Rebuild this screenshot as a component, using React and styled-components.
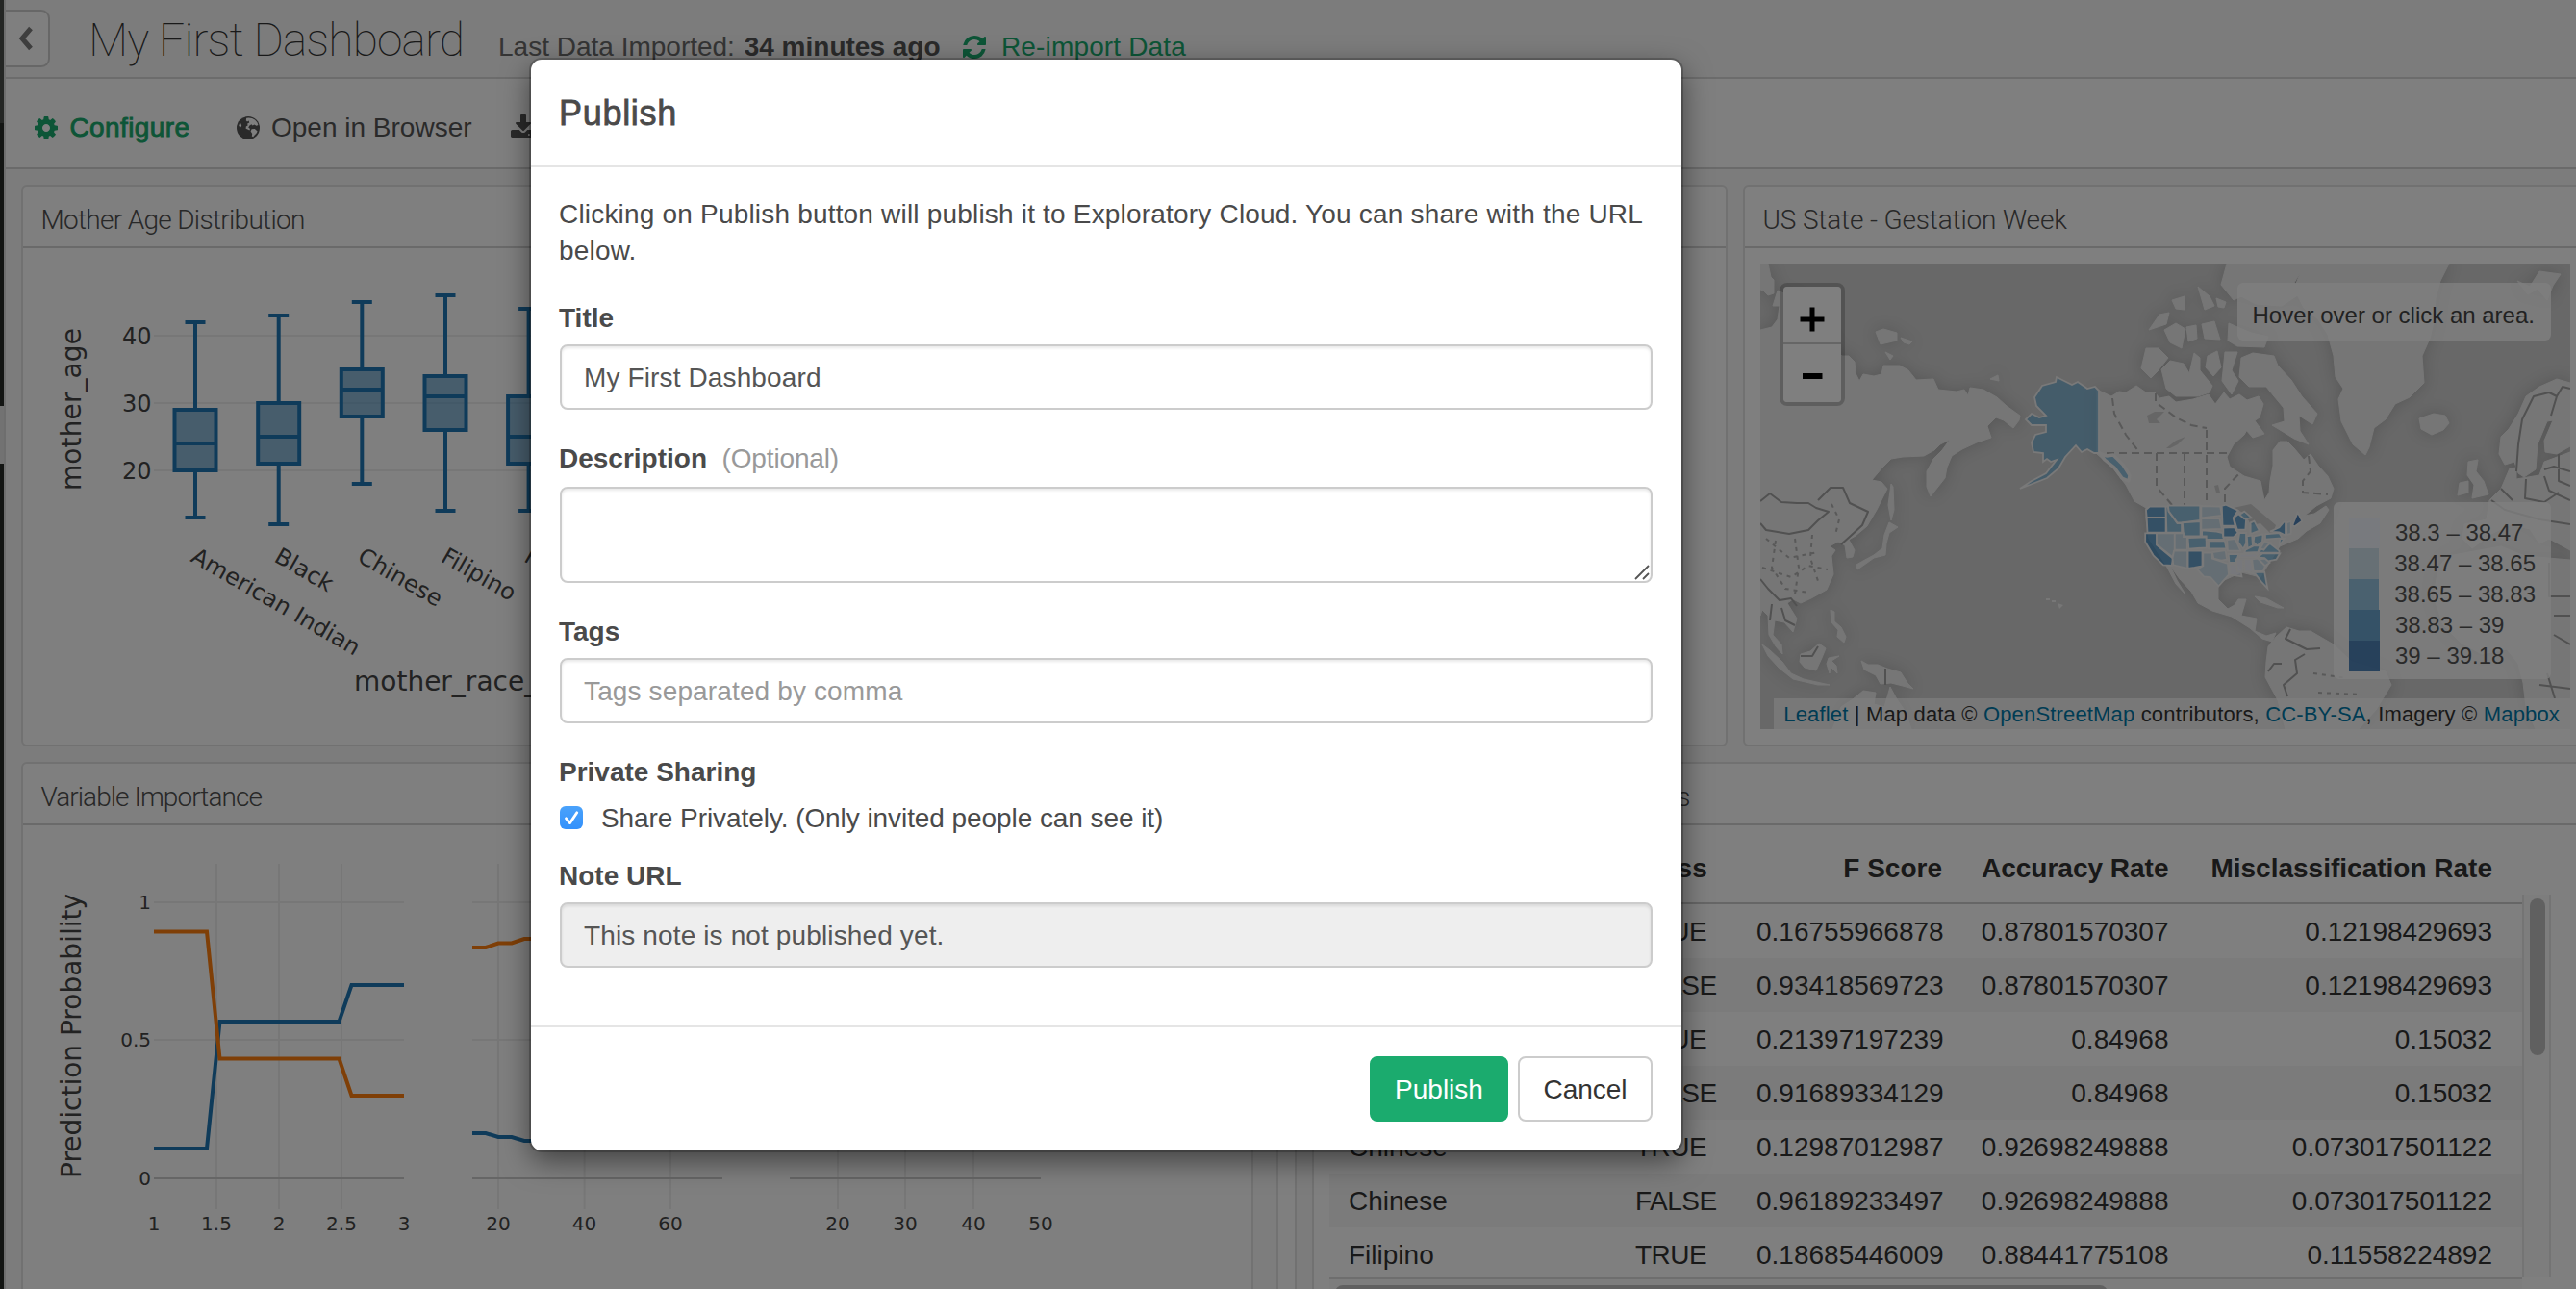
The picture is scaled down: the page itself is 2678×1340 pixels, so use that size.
import React from "react";
import styled, { createGlobalStyle, css } from "styled-components";

const GlobalStyle = createGlobalStyle`
  * { box-sizing: border-box; }
  html, body { margin: 0; padding: 0; overflow: hidden; }
  body {
    font-family: "Liberation Sans", Arial, sans-serif;
    font-size: 28px;
    color: #333;
    background: #f8f8f8;
  }
`;

/* ---------- page shell ---------- */

const Page = styled.div`
  position: relative;
  display: flex;
  width: 2678px;
  height: 1340px;
  overflow: hidden;
  background: #f8f8f8;
`;

const Rail = styled.div`
  flex: none;
  width: 4px;
  display: flex;
  flex-direction: column;
`;

const RailPart = styled.div`
  flex: ${(p) => (p.$h ? `0 0 ${p.$h}px` : "1")};
  background: ${(p) => p.$color};
`;

const Main = styled.main`
  flex: 1;
  min-width: 0;
  border-left: 2px solid #dcdcdc;
`;

const Header = styled.header`
  display: flex;
  align-items: baseline;
  height: 82px;
  border-bottom: 2px solid #d8d8d8;
  white-space: nowrap;
`;

const BackButton = styled.div`
  align-self: flex-start;
  display: flex;
  align-items: center;
  justify-content: center;
  width: 46px;
  height: 60px;
  margin: 10px 40px 0 0;
  padding-right: 5px;
  border: 2px solid #cfcfcf;
  border-left: 0;
  border-radius: 0 9px 9px 0;
  background: #fff;
`;

const PageTitle = styled.h1`
  margin: 0;
  width: 426px;
  font-family: Roboto, "Liberation Sans", sans-serif;
  font-size: 48px;
  font-weight: 100;
  line-height: 84px;
  letter-spacing: -0.9px;
  color: #333;
`;

const ImportInfo = styled.div`
  color: #6a6a6a;
  width: 481px;
  b { color: #555; margin-left: 2px; }
`;

const ImportLink = styled.a`
  align-self: flex-start;
  display: flex;
  align-items: center;
  gap: 14px;
  height: 97px;
  letter-spacing: 0.15px;
  color: #1bab6e;
`;

const Toolbar = styled.nav`
  display: flex;
  align-items: center;
  height: 94px;
  padding: 9px 0 0 28px;
  border-bottom: 2px solid #d4d4d4;
  background: #fff;
  white-space: nowrap;
`;

const Tool = styled.div`
  display: flex;
  align-items: center;
  gap: 10.5px;
  margin-right: ${(p) => p.$after || 0}px;
  color: ${(p) => (p.$active ? "#1bab6e" : "#555")};
  ${(p) =>
    p.$active &&
    css`
      letter-spacing: 0.4px;
      -webkit-text-stroke: 0.9px #1bab6e;
    `}
  svg { display: block; }
`;

const Board = styled.section`
  display: flex;
  flex-direction: column;
  gap: 16px;
  padding: 16px 0 0 16px;
`;

const BoardRow = styled.div`
  display: flex;
  gap: 16px;
  height: 584px;
`;

const CardBox = styled.article`
  flex: none;
  width: ${(p) => p.$w}px;
  border: 2px solid #e2e2e2;
  border-radius: 6px;
  background: #fff;
  overflow: hidden;
`;

const CardTitle = styled.h2`
  margin: 0;
  height: 64px;
  padding: 6px 0 0 18.5px;
  border-bottom: 2px solid #d4d4d4;
  font-family: Roboto, "Liberation Sans", sans-serif;
  font-size: 28px;
  font-weight: 300;
  line-height: 57px;
  letter-spacing: ${(p) => p.$track || -0.7}px;
  color: #505050;
  white-space: nowrap;
`;

const CardBody = styled.div`
  display: flex;
  height: 516px;
  padding: ${(p) => p.$pad || "0"};
`;

function Card({ title, width, track, pad, children }) {
  return (
    <CardBox $w={width}>
      <CardTitle $track={track}>{title}</CardTitle>
      <CardBody $pad={pad}>{children}</CardBody>
    </CardBox>
  );
}

/* ---------- icons (1792-unit grid) ---------- */

const ICONS = {
  cog: "M1152 896q0-106-75-181t-181-75-181 75-75 181 75 181 181 75 181-75 75-181zm512-109v222q0 12-8 23t-20 13l-185 28q-19 54-39 91 35 50 107 138 10 12 10 25t-9 23q-27 37-99 108t-94 71q-12 0-26-9l-138-108q-44 23-91 38-16 136-29 186-7 28-36 28h-222q-14 0-24.5-8.5t-11.5-21.5l-28-184q-49-16-90-37l-141 107q-10 9-25 9-14 0-25-11-126-114-165-168-7-10-7-23 0-12 8-23 15-21 51-66.5t54-70.5q-27-50-41-99l-183-27q-13-2-21-12.5t-8-23.5v-222q0-12 8-23t19-13l186-28q14-46 39-92-40-57-107-138-10-12-10-24 0-10 9-23 26-36 98.5-107.5t94.5-71.5q13 0 26 10l138 107q44-23 91-38 16-136 29-186 7-28 36-28h222q14 0 24.5 8.5t11.5 21.5l28 184q49 16 90 37l142-107q9-9 24-9 13 0 25 10 129 119 165 170 7 8 7 22 0 12-8 23-15 21-51 66.5t-54 70.5q26 50 41 98l183 28q13 2 21 12.5t8 23.5z",
  refresh:
    "M1639 1056q0 5-1 7-64 268-268 434.5t-478 166.5q-146 0-282.5-55t-243.5-157l-129 129q-19 19-45 19t-45-19-19-45v-448q0-26 19-45t45-19h448q26 0 45 19t19 45-19 45l-137 137q71 66 161 102t187 36q134 0 250-65t186-179q11-17 53-117 8-23 30-23h192q13 0 22.5 9.5t9.5 22.5zm25-800v448q0 26-19 45t-45 19h-448q-26 0-45-19t-19-45 19-45l138-138q-148-137-349-137-134 0-250 65t-186 179q-11 17-53 117-8 23-30 23h-199q-13 0-22.5-9.5t-9.5-22.5v-7q65-268 270-434.5t480-166.5q146 0 284 55.5t245 156.5l130-129q19-19 45-19t45 19 19 45z",
  download:
    "M1344 1344q0-26-19-45t-45-19-45 19-19 45 19 45 45 19 45-19 19-45zm256 0q0-26-19-45t-45-19-45 19-19 45 19 45 45 19 45-19 19-45zm128-224v320q0 40-28 68t-68 28h-1472q-40 0-68-28t-28-68v-320q0-40 28-68t68-28h465l135 136q58 56 136 56t136-56l136-136h464q40 0 68 28t28 68zm-325-569q17 41-14 70l-448 448q-18 19-45 19t-45-19l-448-448q-31-29-14-70 17-39 59-39h256v-448q0-26 19-45t45-19h256q26 0 45 19t19 45v448h256q42 0 59 39z",
};

function Icon({ name }) {
  return (
    <svg width="28" height="28" viewBox="0 0 1792 1792" fill="currentColor">
      <path d={ICONS[name]} />
    </svg>
  );
}

function GlobeIcon() {
  return (
    <svg width="28" height="28" viewBox="0 0 28 28">
      <circle cx="14" cy="14" r="12" fill="currentColor" />
      <path
        fill="#fff"
        d="M12.2 3.8 L14.6 3.4 18 4 21 5.6 23.4 8.2 24.4 11 22.6 11.8 20.4 10.6 18.6 11.6 17.4 10.2 15.4 11.4 14.2 13.6 16 15 15.4 16.6 13.4 15.4 11.6 14.8 11.8 12.6 13.6 11.4 13.2 9.6 15.2 8.4 14.6 6.6 13 7.4 11.8 6.2z
           M17.6 15.2 L20.8 15 23.6 17.4 22.6 19.6 20.6 21.4 19.2 23.2 17.8 22.6 18.2 20 16.6 17.6z
           M5.2 8.4 L6.4 9.4 7.2 11.8 6.2 13.2 4.2 12z"
      />
    </svg>
  );
}

function ChevronIcon() {
  return (
    <svg width="22" height="28" viewBox="0 0 22 28" fill="none">
      <path d="M17 3.5 L8 14 L17 24.5" stroke="#7c7c7c" strokeWidth="5" />
    </svg>
  );
}

/* ---------- charts ---------- */

const ChartSvg = styled.svg`
  flex: none;
  display: block;
  text {
    font-family: "DejaVu Sans", Verdana, sans-serif;
    fill: #444;
  }
`;

const yAge = (v) => 629 - v * 7;

const BOXES = [
  { x: 203, s: [13, 20, 24, 29, 42], label: "American Indian" },
  { x: 289.7, s: [12, 21, 25, 30, 43], label: "Black" },
  { x: 376.3, s: [18, 28, 32, 35, 45], label: "Chinese" },
  { x: 463, s: [14, 26, 31, 34, 46], label: "Filipino" },
  { x: 549.6, s: [14, 21, 25, 31, 44], label: "Hawaiian" },
];

function BoxPlot() {
  return (
    <ChartSvg width="875" height="516" viewBox="24 258 875 516">
      {[20, 30, 40].map((v) => (
        <g key={v}>
          <path d={`M160 ${yAge(v)}H880`} stroke="#eee" strokeWidth="2" />
          <text x="157.5" y={yAge(v) + 8.5} fontSize="24" textAnchor="end">
            {v}
          </text>
        </g>
      ))}
      {BOXES.map(({ x, s, label }) => (
        <g key={label}>
          <g stroke="#1f77b4" strokeWidth="4" fill="none">
            <path d={`M${x} ${yAge(s[4])}V${yAge(s[3])}M${x} ${yAge(s[1])}V${yAge(s[0])}`} />
            <path d={`M${x - 10.5} ${yAge(s[4])}h21M${x - 10.5} ${yAge(s[0])}h21`} />
            <rect
              x={x - 21.5}
              y={yAge(s[3])}
              width="43"
              height={yAge(s[1]) - yAge(s[3])}
              fill="#1f77b4"
              fillOpacity="0.5"
            />
            <path d={`M${x - 21.5} ${yAge(s[2])}h43`} />
          </g>
          <text transform={`translate(${x - 6} 583) rotate(30)`} fontSize="24" letterSpacing="0.15">
            {label}
          </text>
        </g>
      ))}
      <text transform="translate(84 510) rotate(-90)" fontSize="28" textLength="169">
        mother_age
      </text>
      <text x="368" y="718" fontSize="28">
        mother_race_
      </text>
    </ChartSvg>
  );
}

const FACETS = [
  {
    from: 160, to: 420, grid: [225, 290, 355],
    ticks: [[160, "1"], [225, "1.5"], [290, "2"], [355, "2.5"], [420, "3"]],
    blue: "160,1194 215,1194 228.5,1062 352.5,1062 365.5,1024 420,1024",
    orange: "160,968.5 215,968.5 228.5,1100.5 352.5,1100.5 365.5,1139 420,1139",
  },
  {
    from: 491, to: 751, grid: [518, 607.6, 697],
    ticks: [[518, "20"], [607.6, "40"], [697, "60"]],
    blue: "491,1178 505,1178 518,1182 532,1182 545,1186 560,1186",
    orange: "491,985 505,985 518,980.5 532,980.5 545,976 560,976",
  },
  {
    from: 821, to: 1082, grid: [871, 941, 1012],
    ticks: [[871, "20"], [941, "30"], [1012, "40"], [1082, "50"]],
  },
];

function LineFacets() {
  return (
    <ChartSvg width="1277" height="482" viewBox="24 858 1277 482">
      {FACETS.map((f) => (
        <g key={f.from}>
          <g stroke="#eee" strokeWidth="2">
            <path d={`M${f.from} 938H${f.to}M${f.from} 1081H${f.to}`} />
            {f.grid.map((x) => (
              <path key={x} d={`M${x} 898V1257`} />
            ))}
          </g>
          <path d={`M${f.from} 1225H${f.to}`} stroke="#ccc" strokeWidth="2" />
          {f.blue && <polyline points={f.blue} fill="none" stroke="#1f77b4" strokeWidth="4" />}
          {f.orange && <polyline points={f.orange} fill="none" stroke="#ff7f0e" strokeWidth="4" />}
          {f.ticks.map(([x, t]) => (
            <text key={t} x={x} y="1279" fontSize="20" textAnchor="middle">
              {t}
            </text>
          ))}
        </g>
      ))}
      <text x="157" y="945" fontSize="20" textAnchor="end">1</text>
      <text x="157" y="1088" fontSize="20" textAnchor="end">0.5</text>
      <text x="157" y="1232" fontSize="20" textAnchor="end">0</text>
      <text transform="translate(84 1225) rotate(-90)" fontSize="28" textLength="296">
        Prediction Probability
      </text>
    </ChartSvg>
  );
}

const TrackColumn = styled.div`
  width: 28px;
  border: solid #e4e4e4;
  border-width: 0 2px;
  background: #fafafa;
`;

/* ---------- map ---------- */

const BLUES = ["#eff3ff", "#bdd7e7", "#6baed6", "#3182bd", "#08519c"];

const LAND = [
  "1830,274 1838,274 1841,288 1844,291 1844,305 1838,307 1833,302 1830,301",
  "1830,343 1842,340 1848,332 1850,318 1843,318 1848,302 1870,312 1890,330 1905,360 1915,370 1922,370 1928,376 1929,388 1933,396 1937,389 1948,391 1956,389 1958,380 1975,380 1984,385 1992,395 2010,394 2015,405 2034,407 2042,405 2046,411 2048,403 2062,405 2076,413 2086,422 2100,432 2099,437 2093,445 2083,437 2075,434 2066,443 2070,455 2055,460 2040,467 2029,474 2024,486 2022,497 2007,516 2003,506 2003,490 2010,477 2019,468 2027,457 2017,462 2011,468 2000,474 1978,475 1966,477 1957,486 1946,499 1956,501 1962,508 1951,530 1941,547 1929,557 1922,561 1928,572 1926,579 1920,580 1918,567 1911,563 1902,568 1908,572 1904,578 1906,597 1899,613 1883,622 1872,627 1864,623 1858,627 1868,643 1864,657 1855,647 1845,645 1843,660 1852,670 1853,680 1846,672 1839,660 1838,640 1832,634 1830,640",
  "1966,503 1968,506 1969,530 1966,541 1963,525",
  "1964,543 1973,548 1964,554 1961,565 1960,577 1948,580 1941,585 1931,592 1930,587 1937,583 1948,577 1957,570 1959,556",
  "1832,670 1840,676 1853,688 1862,700 1875,706 1902,712 1890,712 1864,706 1849,694 1838,682",
  "1872,680 1882,677 1891,669 1898,674 1894,684 1888,697 1876,694 1871,688",
  "1901,684 1912,682 1904,687 1909,692 1910,700 1903,693 1902,700 1899,690",
  "1903,634 1907,636 1907,646 1914,652 1919,662 1917,668 1910,662 1911,655 1904,647",
  "1935,687 1942,691 1952,691 1962,695 1976,699 1983,710 1989,716 1978,713 1966,710 1955,711 1950,702 1938,696",
  "1905,758 1914,735 1926,727 1937,718 1950,720 1948,732 1959,735 1965,714 1972,727 1981,740 1987,758",
  "1950,345 1958,342 1972,346 1972,354 1955,358",
  "1976,351 1988,355 1985,358 1979,356",
  "1960,366 1968,370 1965,374",
  "2069,394 2077,390 2078,396",
  "2180,405 2195,412 2203,407 2210,408 2221,401 2231,408 2240,408 2245,414 2255,412 2262,418 2280,415 2296,410 2303,420 2312,408 2318,415 2328,410 2336,416 2348,412 2353,420 2349,434 2340,440 2333,452 2322,462 2315,475 2318,485 2333,495 2350,500 2354,520 2359,512 2360,500 2363,484 2363,468 2370,459 2378,459 2385,466 2395,478 2402,472 2410,484 2420,495 2426,508 2423,518 2408,526 2396,536 2406,534 2418,526 2421,530 2412,544 2398,552 2389,560 2370,568 2350,600 2330,595 2306,606 2306,623 2316,633 2323,629 2327,623 2335,623 2330,640 2346,643 2344,656 2356,661 2366,658 2362,667 2352,664 2339,653 2320,641 2300,635 2285,627 2278,615 2266,602 2256,588 2263,603 2272,618 2262,607 2252,588 2234,560 2231,540 2231,528 2219,521 2210,504 2197,487 2180,472",
  "2231,362 2244,362 2254,372 2243,386 2236,393 2226,383",
  "2247,384 2256,375 2270,378 2276,388 2281,367 2287,372 2287,385 2300,401 2297,408 2285,412 2262,412 2252,404",
  "2234,343 2245,327 2255,325 2252,337",
  "2258,312 2271,308 2271,322 2262,321",
  "2250,343 2262,336 2272,342 2268,362 2256,356",
  "2273,340 2283,338 2284,352 2275,355",
  "2285,298 2297,308 2302,318 2292,322",
  "2289,337 2302,334 2308,353 2292,352",
  "2304,310 2314,314 2312,320 2306,319",
  "2295,370 2305,365 2309,382 2301,391 2293,382",
  "2313,366 2326,366 2320,385 2327,396 2320,410 2310,396",
  "2317,336 2340,346 2358,350 2354,361 2326,360 2316,354",
  "2315,274 2397,274 2385,294 2390,306 2372,318 2345,316 2330,308 2322,312 2309,296",
  "2330,372 2342,367 2364,370 2368,380 2382,395 2393,412 2409,430 2404,441 2390,432 2391,448 2400,462 2385,456 2362,442 2375,438 2374,424 2364,412 2356,402 2338,402 2328,392",
  "2331,432 2340,432 2354,451 2342,455 2334,446",
  "2395,274 2546,274 2537,292 2532,310 2530,335 2526,352 2518,370 2520,398 2505,413 2490,420 2480,436 2468,445 2463,465 2459,473 2446,462 2434,438 2431,415 2436,404 2428,392 2426,370 2420,348 2410,332 2395,320 2385,300",
  "2515,435 2530,430 2542,432 2546,440 2540,447 2528,452 2517,446",
  "2617,292 2630,298 2640,282 2662,285 2654,297 2648,312 2638,300 2628,306",
  "2672,398 2658,394 2640,402 2626,412 2618,430 2608,446 2600,454 2598,472 2604,483 2614,480 2618,492 2624,496 2636,488 2638,462 2648,438 2654,437 2645,458 2646,470 2658,472 2672,464",
  "2609,487 2616,486 2616,498 2640,494 2645,480 2672,470 2672,572 2650,560 2640,565 2630,550 2610,545 2590,555 2570,570 2560,560 2562,545 2585,540 2588,520 2600,508",
  "2566,480 2576,478 2574,490 2582,500 2587,514 2570,518 2572,504 2565,494",
  "2557,502 2566,500 2566,512 2555,515",
  "2535,590 2545,578 2600,568 2625,578 2672,582 2672,758 2636,758 2626,735 2623,710 2618,690 2606,675 2580,680 2558,668 2540,650 2530,620",
  "2358,672 2366,662 2377,652 2390,656 2402,656 2426,670 2445,688 2480,698 2486,712 2470,738 2452,758 2376,758 2368,728 2355,704 2356,688",
  "2344,620 2356,622 2374,632 2368,632 2350,626",
];

const BORDERS =
  "M1830 521L1840 513 1852 522 1868 523 1880 523 1888 528 1901 532 1890 541 1880 551 1860 555 1836 551 1830 544M1890 520L1903 507 1916 507 1923 523 1942 532 1936 546 1924 557 1914 566M1830 602L1838 612 1850 624 1862 622 1868 630M1842 628L1840 645M1852 632L1856 645 1866 650M1960 695V712M1872 682L1884 682 1890 672M2381 654L2376 664 2398 675 2412 674M2396 680L2386 686 2388 700 2374 712 2378 724M2358 698L2364 690 2372 690M2672 404L2664 402 2658 412 2650 408 2634 412 2622 436 2618 462 2616 490M2658 412L2652 432M2645 488L2655 485 2672 490M2626 498L2625 518 2645 522 2660 512M2600 508L2612 520M2660 472L2660 500 2672 505M2645 495L2650 510 2672 520M2590 520L2604 530 2640 540 2672 545M2650 585V620H2672M2655 640H2672M2655 660L2672 670M2640 712L2672 716M2648 700L2656 726";

const DASHES =
  "M2190 471H2318M2242 471V506L2258 525M2271 471V525M2294 447V525M2196 414L2198 430 2210 452 2224 470M2241 409V418L2262 434 2278 442 2294 445M2313 522V508L2330 490M2400 474L2402 490 2394 500 2394 512 2420 514";

const STATES = [
  [4, "1068,140 1112,140 1112,174 1060,174 1058,150"],
  [4, "1060,174 1112,174 1112,221 1062,221"],
  [4, "1056,223 1087,223 1087,260 1131,302 1128,324 1105,322 1078,292 1056,250"],
  [2, "1087,223 1136,223 1136,275 1131,298 1087,258"],
  [3, "1112,140 1118,140 1120,155 1143,192 1155,192 1155,221 1114,221"],
  [3, "1118,137 1205,137 1205,183 1155,190 1143,190 1120,155"],
  [3, "1157,190 1206,186 1206,232 1160,232"],
  [2, "1136,223 1160,223 1160,234 1170,234 1170,275 1136,275"],
  [2, "1134,278 1171,278 1171,333 1132,322 1130,300"],
  [3, "1172,237 1222,235 1222,268 1174,272"],
  [4, "1172,278 1211,278 1211,325 1190,330 1172,333"],
  [2, "1208,138 1260,140 1264,168 1208,175"],
  [2, "1208,177 1258,177 1264,210 1208,212"],
  [3, "1210,214 1250,218 1266,222 1270,243 1222,243 1222,232 1210,232"],
  [3, "1228,247 1272,247 1276,271 1228,271"],
  [2, "1238,282 1274,276 1278,305 1262,308 1242,302"],
  [2, "1213,284 1238,284 1238,302 1280,318 1283,352 1255,388 1233,360 1215,358 1197,335 1213,325"],
  [4, "1264,138 1275,134 1308,152 1295,175 1300,200 1266,200"],
  [4, "1268,206 1298,204 1308,222 1296,235 1268,235"],
  [2, "1278,243 1300,240 1315,278 1280,278"],
  [3, "1282,288 1310,288 1302,315 1284,315"],
  [1, "1284,320 1302,320 1316,345 1318,358 1284,352"],
  [4, "1296,175 1310,162 1330,180 1328,212 1306,212"],
  [3, "1312,165 1325,155 1345,175 1325,178"],
  [3, "1312,222 1330,222 1330,255 1322,272 1308,250"],
  [3, "1332,232 1346,230 1348,262 1334,270"],
  [3, "1342,190 1352,185 1366,215 1342,225"],
  [3, "1352,232 1376,226 1374,250 1360,262 1350,250"],
  [3, "1328,275 1350,262 1368,262 1362,282 1325,284"],
  [1, "1315,288 1365,286 1355,298 1312,298"],
  [1, "1303,304 1322,304 1322,343 1306,343"],
  [1, "1325,304 1343,304 1348,342 1326,343"],
  [2, "1346,304 1362,302 1382,325 1376,342 1350,342"],
  [3, "1335,346 1380,344 1388,395 1372,375 1355,350"],
  [2, "1364,304 1382,302 1394,315 1382,325"],
  [3, "1360,298 1375,286 1422,286 1412,305 1390,310 1380,300"],
  [3, "1365,278 1395,255 1420,278 1420,284 1368,284"],
  [2, "1368,270 1380,248 1395,252 1378,275"],
  [3, "1382,226 1420,222 1428,238 1382,242"],
  [4, "1395,218 1420,205 1432,188 1437,188 1437,230 1420,220"],
  [2, "1440,190 1452,185 1452,225 1440,228"],
  [3, "1422,240 1434,240 1420,262"],
  [5, "1456,198 1470,158 1482,185 1462,202"],
];

const ALASKA =
  "2115,413 2123,401 2137,397 2138,392 2154,400 2160,397 2170,404 2178,402 2182,406 2182,471 2177,471 2170,467 2164,470 2158,463 2147,475 2140,487 2128,497 2100,508 2112,500 2127,492 2138,478 2132,480 2128,477 2124,480 2124,471 2114,470 2112,460 2116,452 2127,449 2127,442 2112,442 2106,436 2112,430 2120,434 2127,432 2117,422";
const PANHANDLE = "2183,471 2190,474 2197,473 2207,483 2214,494 2213,500 2206,497 2198,486 2188,478";

const MapFrame = styled.div`
  position: relative;
  flex: none;
  width: 842px;
  height: 484px;
  overflow: hidden;
  background: #d0d0d0;
`;

const MapSvg = styled.svg`
  display: block;
  .land {
    fill: #ececec;
    stroke: #ececec;
    stroke-width: 1;
    stroke-linejoin: round;
    filter: drop-shadow(0 0 8px rgba(0, 0, 0, 0.16));
  }
  .border { fill: none; stroke: #a2a2a2; stroke-width: 2; stroke-linejoin: round; }
  .dash { fill: none; stroke: #b2b2b2; stroke-width: 2; stroke-dasharray: 8 5; }
  .fine { stroke-dasharray: 4 5; }
  .lake { fill: #cccccc; }
  .state { stroke: #f2f2f2; stroke-width: 1.8; fill-opacity: 0.7; vector-effect: non-scaling-stroke; }
  .panhandle { stroke-width: 3.5; stroke-linejoin: round; }
`;

const ZoomControl = styled.div`
  position: absolute;
  left: 20px;
  top: 20px;
  display: flex;
  flex-direction: column;
  width: 68px;
  height: 128px;
  border: 4px solid rgba(0, 0, 0, 0.2);
  border-radius: 8px;
  background-clip: padding-box;
`;

const ZoomButton = styled.div`
  display: flex;
  align-items: center;
  justify-content: center;
  flex: none;
  height: 60px;
  background: #fff;
  border-radius: ${(p) => (p.$top ? "4px 4px 0 0" : "0 0 4px 4px")};
  border-bottom: ${(p) => (p.$top ? "2px solid #ccc" : "0")};
  padding-top: ${(p) => (p.$top ? 10 : 6)}px;
`;

const HoverInfo = styled.div`
  position: absolute;
  right: 20px;
  top: 20px;
  width: 326px;
  height: 60px;
  padding-left: 15.5px;
  border-radius: 6px;
  background: rgba(255, 255, 255, 0.8);
  font-size: 24px;
  line-height: 67px;
  color: #444;
  white-space: nowrap;
`;

const Legend = styled.div`
  position: absolute;
  right: 20px;
  top: 248px;
  width: 226px;
  height: 184px;
  padding: 16px;
  border-radius: 6px;
  background: rgba(255, 255, 255, 0.8);
  font-size: 24px;
  line-height: 32px;
  color: #555;
  white-space: nowrap;
`;

const LegendRow = styled.div`
  display: flex;
  gap: 16px;
  height: 32px;
  &::before {
    content: "";
    width: 32px;
    background: ${(p) => p.$color};
    opacity: 0.7;
  }
`;

const Attribution = styled.div`
  position: absolute;
  right: 0;
  bottom: 0;
  height: 32px;
  padding: 0 11px 0 10px;
  background: rgba(255, 255, 255, 0.7);
  font-size: 22px;
  line-height: 33px;
  letter-spacing: 0.165px;
  white-space: nowrap;
  color: #333;
  a { color: #0078a8; }
`;

const RANGES = ["38.3 – 38.47", "38.47 – 38.65", "38.65 – 38.83", "38.83 – 39", "39 – 39.18"];

function StateMap() {
  return (
    <MapFrame>
      <MapSvg width="842" height="484" viewBox="1830 274 842 484">
        <g className="land">
          {LAND.map((points) => (
            <polygon key={points} points={points} />
          ))}
        </g>
        <g className="lake">
          <path d="M2232 432L2240 428 2250 428 2242 436 2246 440 2234 440zM2252 466L2262 458 2272 454 2264 462 2256 466zM2302 505L2306 504 2308 512 2304 512z" />
          <path d="M2322 528L2340 524 2352 534 2366 546 2362 556 2350 544 2340 546 2334 534z" />
        </g>
        <path className="border" d={BORDERS} />
        <path className="dash" d={DASHES} />
        <path
          className="dash fine"
          d="M1836 560L1860 580 1890 574M1832 590L1862 600 1880 588 1900 592M1846 562L1842 590 1856 612 1880 616M1866 560L1870 590 1866 618M1884 556L1882 580 1890 604M1904 524L1912 540 1908 556M2405 700L2440 705M2410 720L2455 722"
        />
        <g transform="translate(1826 480) scale(0.38275 0.33333)">
          {STATES.map(([level, points]) => (
            <polygon key={points} className="state" points={points} fill={BLUES[level - 1]} />
          ))}
        </g>
        <polygon className="state" points={ALASKA} fill={BLUES[2]} />
        <polygon className="state panhandle" points={PANHANDLE} fill={BLUES[2]} />
        <path d="M2127 622h4v2h-4zM2133 624h4v2h-4zM2139 627l6 2-4 4z" fill="#eee" />
      </MapSvg>
      <ZoomControl>
        <ZoomButton $top>
          <svg width="26" height="26" viewBox="0 0 26 26">
            <path d="M13 0.5V25.5M0.5 13H25.5" stroke="#000" strokeWidth="5" />
          </svg>
        </ZoomButton>
        <ZoomButton>
          <svg width="26" height="26" viewBox="0 0 26 26">
            <path d="M3 13H23.5" stroke="#000" strokeWidth="6" />
          </svg>
        </ZoomButton>
      </ZoomControl>
      <HoverInfo>Hover over or click an area.</HoverInfo>
      <Legend>
        {RANGES.map((r, i) => (
          <LegendRow key={r} $color={BLUES[i]}>
            {r}
          </LegendRow>
        ))}
      </Legend>
      <Attribution>
        <a>Leaflet</a> | Map data © <a>OpenStreetMap</a> contributors, <a>CC-BY-SA</a>, Imagery © <a>Mapbox</a>
      </Attribution>
    </MapFrame>
  );
}

/* ---------- metrics table ---------- */

const TablePane = styled.div`
  flex: none;
  width: 1240px;
  margin-left: 16px;
`;

const TableLine = styled.div`
  display: grid;
  grid-template-columns: 298px 126px 233px 235.5px 336.5px;
  height: 56px;
  line-height: 57px;
  background: ${(p) => (p.$alt ? "#f6f6f6" : "#fff")};
  color: #333;
  white-space: nowrap;
`;

const TableHead = styled(TableLine)`
  height: 82px;
  padding-top: 8px;
  line-height: 73px;
  border-bottom: 2px solid #ccc;
  font-weight: bold;
`;

const TableRows = styled.div`
  height: 390px;
  overflow: hidden;
  border-bottom: 2px solid #ddd;
`;

const Cell = styled.div`
  padding: 0 20px;
  text-align: ${(p) => (p.$num ? "right" : "left")};
  letter-spacing: ${(p) => (p.$tight ? "-0.5px" : "normal")};
`;

const HTrack = styled.div`
  height: 20px;
  padding: 6px 0 0 6px;
  background: #fafafa;
  &::before {
    content: "";
    display: block;
    width: 803px;
    height: 16px;
    border-radius: 8px;
    background: #c1c1c1;
  }
`;

const VTrack = styled.div`
  flex: none;
  width: 30px;
  height: 398px;
  margin-top: 72px;
  padding: 4px 0 0 6px;
  border: solid #e8e8e8;
  border-width: 0 2px;
  background: #fafafa;
  &::before {
    content: "";
    display: block;
    width: 16px;
    height: 163px;
    border-radius: 8px;
    background: #c1c1c1;
  }
`;

const METRICS = [
  ["", "TRUE", "0.16755966878", "0.87801570307", "0.12198429693"],
  ["", "FALSE", "0.93418569723", "0.87801570307", "0.12198429693"],
  ["", "TRUE", "0.21397197239", "0.84968", "0.15032"],
  ["", "FALSE", "0.91689334129", "0.84968", "0.15032"],
  ["Chinese", "TRUE", "0.12987012987", "0.92698249888", "0.073017501122"],
  ["Chinese", "FALSE", "0.96189233497", "0.92698249888", "0.073017501122"],
  ["Filipino", "TRUE", "0.18685446009", "0.88441775108", "0.11558224892"],
];

function MetricsTable() {
  return (
    <>
      <TablePane>
        <TableHead>
          <Cell />
          <Cell>Class</Cell>
          <Cell $num>F Score</Cell>
          <Cell $num>Accuracy Rate</Cell>
          <Cell $num>Misclassification Rate</Cell>
        </TableHead>
        <TableRows>
          {METRICS.map((row, r) => (
            <TableLine key={r} $alt={r % 2 === 1}>
              {row.map((v, c) => (
                <Cell key={c} $num={c > 1} $tight={c === 1}>
                  {v}
                </Cell>
              ))}
            </TableLine>
          ))}
        </TableRows>
        <HTrack />
      </TablePane>
      <VTrack />
    </>
  );
}

/* ---------- publish dialog ---------- */

const Overlay = styled.div`
  position: absolute;
  inset: 0;
  display: flex;
  align-items: flex-start;
  padding: 62px 0 0 552px;
  background: rgba(0, 0, 0, 0.5);
`;

const Dialog = styled.div`
  width: 1196px;
  height: 1134px;
  border-radius: 11px;
  background: #fff;
  box-shadow: 0 0 0 2px rgba(0, 0, 0, 0.2), 0 10px 30px rgba(0, 0, 0, 0.5);
  color: #4a4a4a;
`;

const DialogTitle = styled.h3`
  margin: 0;
  height: 112px;
  padding: 0 29px;
  border-bottom: 2px solid #e5e5e5;
  font-size: 36px;
  font-weight: normal;
  line-height: 112px;
  letter-spacing: 0.7px;
  -webkit-text-stroke: 0.8px #4a4a4a;
`;

const DialogBody = styled.div`
  padding: 30px 30px 60px;
`;

const Lead = styled.p`
  margin: 0 -4px 31px -1px;
  line-height: 38px;
  letter-spacing: 0.19px;
`;

const Label = styled.div`
  margin: 0 0 ${(p) => (p.$below || 8) - 1}px -1px;
  padding-top: ${(p) => (p.$first ? 0 : 1)}px;
  font-weight: bold;
  line-height: 40px;
  span {
    margin-left: 15.5px;
    font-weight: normal;
    letter-spacing: -0.15px;
    color: #999;
  }
`;

const Field = styled.div`
  height: ${(p) => p.$h || 68}px;
  margin-bottom: 30px;
  padding: 0 23px;
  border: 2px solid #ccc;
  border-radius: 8px;
  background: ${(p) => (p.$disabled ? "#eee" : "#fff")};
  box-shadow: inset 0 2px 3px rgba(0, 0, 0, 0.09);
  line-height: 65px;
  letter-spacing: 0.13px;
  color: ${(p) => (p.$placeholder ? "#999" : "#555")};
  ${(p) =>
    p.$resizable &&
    css`
      display: flex;
      align-items: flex-end;
      justify-content: flex-end;
      padding: 0 1px 1px 0;
    `}
  &:last-child { margin-bottom: 0; }
`;

const CheckRow = styled.div`
  display: flex;
  align-items: center;
  gap: 19px;
  height: 40px;
  margin-bottom: 20px;
  line-height: 41px;
  letter-spacing: -0.07px;
`;

const CheckBox = styled.div`
  display: flex;
  width: 24px;
  height: 24px;
  border-radius: 6px;
  background: linear-gradient(#4aa2fb, #3391fb);
`;

const DialogFooter = styled.div`
  display: flex;
  justify-content: flex-end;
  gap: 10px;
  padding: 30px;
  border-top: 2px solid #e5e5e5;
`;

const Button = styled.div`
  width: ${(p) => (p.$primary ? 144 : 140)}px;
  height: 68px;
  border: 2px solid ${(p) => (p.$primary ? "#1bab6e" : "#ccc")};
  border-radius: 8px;
  background: ${(p) => (p.$primary ? "#1bab6e" : "#fff")};
  color: ${(p) => (p.$primary ? "#fff" : "#333")};
  line-height: 65px;
  text-align: center;
`;

function PublishDialog() {
  return (
    <Dialog>
      <DialogTitle>Publish</DialogTitle>
      <DialogBody>
        <Lead>
          Clicking on Publish button will publish it to Exploratory Cloud. You can share with the URL below.
        </Lead>
        <Label $first>Title</Label>
        <Field>My First Dashboard</Field>
        <Label $below={10}>
          Description<span>(Optional)</span>
        </Label>
        <Field $h={100} $resizable>
          <svg width="16" height="16" viewBox="0 0 16 16">
            <path d="M1 15L15 1M9 15L15 9" stroke="#555" strokeWidth="1.8" />
          </svg>
        </Field>
        <Label>Tags</Label>
        <Field $placeholder>Tags separated by comma</Field>
        <Label>Private Sharing</Label>
        <CheckRow>
          <CheckBox>
            <svg width="24" height="24" viewBox="0 0 24 24" fill="none">
              <path d="M6.5 12.8L10.5 17.6L17.8 6.8" stroke="#fff" strokeWidth="2.8" strokeLinecap="round" strokeLinejoin="round" />
            </svg>
          </CheckBox>
          Share Privately. (Only invited people can see it)
        </CheckRow>
        <Label>Note URL</Label>
        <Field $disabled>This note is not published yet.</Field>
      </DialogBody>
      <DialogFooter>
        <Button $primary>Publish</Button>
        <Button>Cancel</Button>
      </DialogFooter>
    </Dialog>
  );
}

/* ---------- app ---------- */

export default function App() {
  return (
    <>
      <GlobalStyle />
      <Page>
        <Rail>
          <RailPart $h={128} $color="#484c49" />
          <RailPart $h={294} $color="#262a27" />
          <RailPart $h={60} $color="#e4e4e4" />
          <RailPart $color="#262a27" />
        </Rail>
        <Main>
          <Header>
            <BackButton>
              <ChevronIcon />
            </BackButton>
            <PageTitle>My First Dashboard</PageTitle>
            <ImportInfo>
              Last Data Imported: <b>34 minutes ago</b>
            </ImportInfo>
            <ImportLink>
              <Icon name="refresh" />
              Re-import Data
            </ImportLink>
          </Header>
          <Toolbar>
            <Tool $active $after={46}>
              <Icon name="cog" />
              Configure
            </Tool>
            <Tool $after={39}>
              <GlobeIcon />
              Open in Browser
            </Tool>
            <Tool>
              <Icon name="download" />
            </Tool>
          </Toolbar>
          <Board>
            <BoardRow>
              <Card title="Mother Age Distribution" width={879}>
                <BoxPlot />
              </Card>
              <Card width={879} />
              <Card title="US State - Gestation Week" width={879} track={-0.15} pad="16px">
                <StateMap />
              </Card>
            </BoardRow>
            <BoardRow>
              <Card title="Variable Importance" width={1326} track={-0.95}>
                <LineFacets />
                <TrackColumn />
              </Card>
              <Card title="Race - Classification Prediction Metrics" width={1326} track={-2.7}>
                <MetricsTable />
              </Card>
            </BoardRow>
          </Board>
        </Main>
        <Overlay>
          <PublishDialog />
        </Overlay>
      </Page>
    </>
  );
}
